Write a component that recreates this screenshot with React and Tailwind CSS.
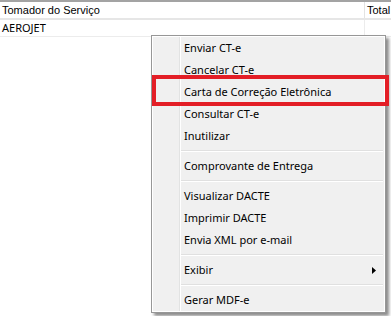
import React from 'react';

const font = { fontFamily: '"Noto Sans", "Open Sans", sans-serif' };
const headFont = { fontFamily: '"Liberation Sans", Arial, sans-serif' };

const groups = [
  ['Enviar CT-e', 'Cancelar CT-e', 'Carta de Correção Eletrônica', 'Consultar CT-e', 'Inutilizar'],
  ['Comprovante de Entrega'],
  ['Visualizar DACTE', 'Imprimir DACTE', 'Envia XML por e-mail'],
  ['Exibir'],
  ['Gerar MDF-e'],
];

const MenuItem = ({ label }) => (
  <div className="relative flex h-[22px] items-center pl-[31px] text-[11px] text-black">
    <span>{label}</span>
    {label === 'Exibir' && (
      <svg className="absolute right-[8px] top-[8px]" width="4" height="7" viewBox="0 0 4 7">
        <polygon points="0,0 4,3.5 0,7" fill="#000" />
      </svg>
    )}
  </div>
);

const Separator = () => (
  <div className="flex h-[8px] flex-col justify-center pl-[27px] pr-[1px]">
    <div className="h-px bg-[#e0e0e0]" />
    <div className="h-px bg-white" />
  </div>
);

export default function App() {
  return (
    <div className="relative h-[316px] w-[391px] overflow-hidden bg-white" style={font}>
      <div className="h-[2px] bg-[#a3a3a3]" />
      <div className="flex h-[18px] border-b-2 border-[#e6e6e6] text-[11px] text-black" style={headFont}>
        <div className="flex w-[364px] items-center pl-[2px]">Tomador do Serviço</div>
        <div className="flex flex-1 items-center border-l border-[#e3e3e3] pl-[2px]">Total</div>
      </div>
      <div className="flex h-[17px] border-b border-[#ececec] text-[11px] text-black">
        <div className="flex w-[364px] items-center pl-[2px]">AEROJET</div>
        <div className="flex-1 border-l border-[#ececec]" />
      </div>

      <div className="absolute left-[151px] top-[35px] w-[235px] border border-[#979797] bg-[#f0f0f0] shadow-[3px_3px_3px_rgba(0,0,0,0.45)]">
        <div className="relative border border-white">
          <div className="absolute bottom-0 left-[26px] top-0 w-px bg-[#e2e3e3]" />
          <div className="absolute bottom-0 left-[27px] top-0 w-px bg-white" />
          {groups.map((g, gi) => (
            <React.Fragment key={gi}>
              {gi > 0 && <Separator />}
              {g.map((label) => (
                <MenuItem key={label} label={label} />
              ))}
            </React.Fragment>
          ))}
        </div>
      </div>

      <div className="absolute left-[152px] top-[75px] h-[31px] w-[237px] border-4 border-[#e31e26]" />
    </div>
  );
}
